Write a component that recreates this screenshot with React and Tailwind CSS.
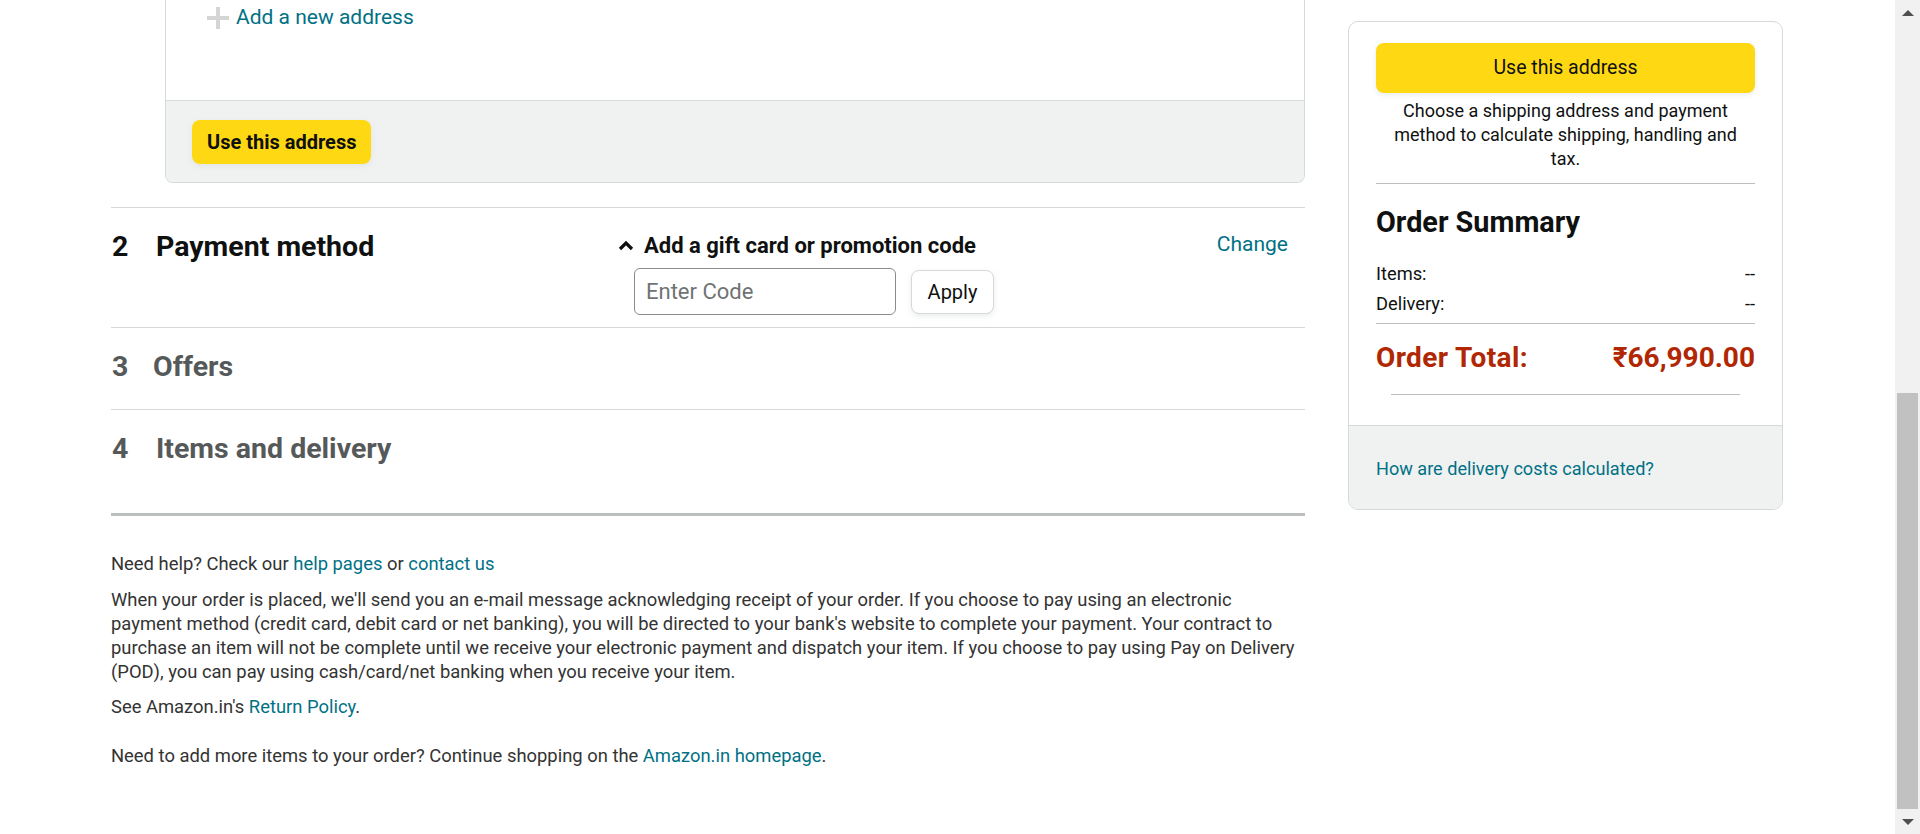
import { useState } from "react";

function PlusIcon() {
  return (
    <svg width="22" height="22" viewBox="0 0 22 22" className="shrink-0">
      <rect x="9" y="0" width="4" height="22" fill="#D5D5D5" />
      <rect x="0" y="9" width="22" height="4" fill="#D5D5D5" />
    </svg>
  );
}

function ChevronUp() {
  return (
    <svg width="16" height="12" viewBox="0 0 16 12" className="shrink-0">
      <polyline points="2,10 8,4 14,10" fill="none" stroke="#0F1111" strokeWidth="3.2" />
    </svg>
  );
}

function Scrollbar() {
  return (
    <div className="w-[25px] h-full bg-[#F1F1F1] flex flex-col items-center">
      <div className="h-[26px] flex items-center justify-center">
        <div className="w-0 h-0 border-x-[6px] border-x-transparent border-b-[6px] border-b-[#505050]" />
      </div>
      <div className="h-[367px]" />
      <div className="w-[21px] h-[416px] bg-[#C1C1C1]" />
      <div className="flex-1 flex items-center justify-center">
        <div className="w-0 h-0 border-x-[6px] border-x-transparent border-t-[6px] border-t-[#505050]" />
      </div>
    </div>
  );
}

function Step({ num, title, muted, titleClass = "", children, className }) {
  return (
    <div className={`border-t border-[#D5D9D9] flex ${className}`}>
      <div
        className={`flex w-[507px] shrink-0 text-[28.5px] leading-[34px] font-bold ${
          muted ? "text-[#565959]" : "text-[#0F1111]"
        }`}
      >
        <span className="w-[45px] pl-[1px]">{num}</span>
        <span className={titleClass}>{title}</span>
      </div>
      {children}
    </div>
  );
}

export default function App() {
  const [code, setCode] = useState("");

  return (
    <div
      className="w-[1920px] h-[834px] overflow-hidden bg-white flex text-[#0F1111]"
      style={{ fontFamily: "Roboto, 'Liberation Sans', sans-serif" }}
    >
      <div className="flex-1 flex pl-[111px] gap-[43px]">
        {/* Left column */}
        <div className="w-[1194px] shrink-0">
          {/* Address card (scrolled) */}
          <div className="ml-[54px] border-x border-b border-[#D5D9D9] rounded-b-[8px] overflow-hidden">
            <div className="h-[100px] pl-[41px] pt-[6px]">
              <a className="flex items-center gap-[7px] h-[24px] text-[21px] text-[#007185] cursor-pointer">
                <PlusIcon />
                Add a new address
              </a>
            </div>
            <div className="border-t border-[#D5D9D9] bg-[#F0F2F2] h-[82px] pl-[26px] pt-[19px]">
              <button className="h-[44px] px-[15px] rounded-[8px] bg-[#FFD814] text-[20px] font-bold shadow-[0_2px_5px_rgba(213,217,217,0.5)]">
                Use this address
              </button>
            </div>
          </div>

          {/* Payment method */}
          <Step num="2" title="Payment method" className="mt-[24px] pt-[22px] pb-[12px]">
            <div className="flex-1 flex flex-col">
              <button className="flex items-center gap-[10px] h-[26px] pt-[4px] text-[22px] font-bold">
                <ChevronUp />
                Add a gift card or promotion code
              </button>
              <div className="flex items-center gap-[15px] ml-[16px] mt-[12px]">
                <input
                  value={code}
                  onChange={(e) => setCode(e.target.value)}
                  placeholder="Enter Code"
                  className="w-[262px] h-[47px] border border-[#888C8C] rounded-[6px] px-[11px] text-[22px] placeholder:text-[#6F7373] outline-none"
                />
                <button className="w-[83px] h-[44px] border border-[#D5D9D9] rounded-[8px] bg-white text-[20px] shadow-[0_2px_5px_rgba(213,217,217,0.5)]">
                  Apply
                </button>
              </div>
            </div>
            <a className="pr-[17px] h-[26px] pt-[4px] flex items-center text-[21px] text-[#007185] cursor-pointer">
              Change
            </a>
          </Step>

          <Step num="3" title="Offers" muted titleClass="-ml-[3px]" className="pt-[22px] pb-[25px]" />
          <Step num="4" title="Items and delivery" muted className="pt-[22px] pb-[47px]" />
          <div className="h-[3px] bg-[#BBBFBF]" />

          {/* Footer info */}
          <div className="text-[18.4px] leading-[24px] text-[#333]">
            <p className="mt-[36px]">
              Need help? Check our <a className="text-[#007185]">help pages</a> or{" "}
              <a className="text-[#007185]">contact us</a>
            </p>
            <p className="mt-[12px] whitespace-nowrap">
              When your order is placed, we'll send you an e-mail message acknowledging receipt of your
              order. If you choose to pay using an electronic
              <br />
              payment method (credit card, debit card or net banking), you will be directed to your
              bank's website to complete your payment. Your contract to
              <br />
              purchase an item will not be complete until we receive your electronic payment and
              dispatch your item. If you choose to pay using Pay on Delivery
              <br />
              (POD), you can pay using cash/card/net banking when you receive your item.
            </p>
            <p className="mt-[11px]">
              See Amazon.in's <a className="text-[#007185]">Return Policy</a>.
            </p>
            <p className="mt-[25px]">
              Need to add more items to your order? Continue shopping on the{" "}
              <a className="text-[#007185]">Amazon.in homepage</a>.
            </p>
          </div>
        </div>

        {/* Right column: summary */}
        <div className="w-[435px] shrink-0 pt-[21px]">
          <div className="border border-[#D5D9D9] rounded-[10px] overflow-hidden">
            <div className="px-[27px] pt-[21px]">
              <button className="w-full h-[50px] rounded-[8px] bg-[#FFD814] text-[19.5px] shadow-[0_2px_5px_rgba(213,217,217,0.5)]">
                Use this address
              </button>
              <p className="mt-[6px] text-center text-[18px] leading-[24px]">
                Choose a shipping address and payment
                <br />
                method to calculate shipping, handling and
                <br />
                tax.
              </p>
              <div className="mt-[12px] h-px bg-[#BBBFBF]" />
              <h3 className="mt-[21px] text-[28.8px] leading-[34px] font-bold">Order Summary</h3>
              <div className="mt-[23px] flex flex-col gap-[6px] text-[18.3px] leading-[24px]">
                <div className="flex justify-between">
                  <span>Items:</span>
                  <span>--</span>
                </div>
                <div className="flex justify-between">
                  <span>Delivery:</span>
                  <span>--</span>
                </div>
              </div>
              <div className="mt-[7px] h-px bg-[#BBBFBF]" />
              <div className="mt-[17px] flex justify-between text-[28px] leading-[34px] font-bold text-[#B12704]">
                <span className="tracking-[0.4px]">Order Total:</span>
                <span>₹66,990.00</span>
              </div>
              <div className="mt-[19px] mx-[15px] h-px bg-[#BBBFBF]" />
              <div className="h-[30px]" />
            </div>
            <div className="border-t border-[#D5D9D9] bg-[#F0F2F2] px-[27px] pt-[31px] pb-[27px]">
              <a className="text-[18.1px] leading-[24px] text-[#007185]">How are delivery costs calculated?</a>
            </div>
          </div>
        </div>
      </div>
      <Scrollbar />
    </div>
  );
}
